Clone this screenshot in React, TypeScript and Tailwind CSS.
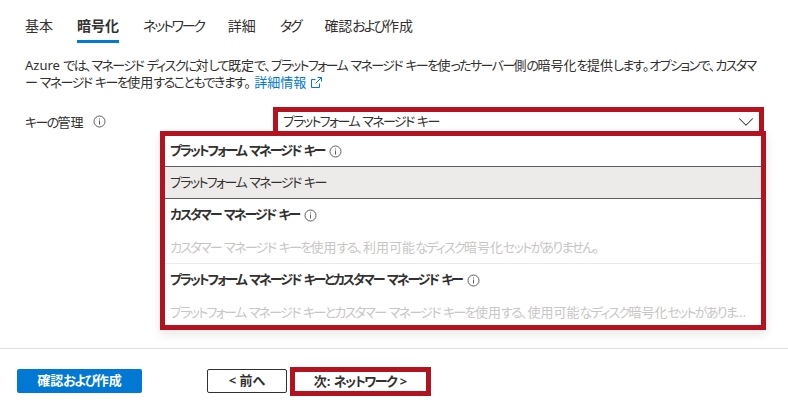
import { ChevronDown } from "lucide-react";

const font = "font-['Noto_Sans','Noto_Sans_CJK_JP',sans-serif] [font-feature-settings:'palt']";

// kana in the reference font runs narrower than in Noto, so those runs get tightened
const Jp = ({ text, tight = "tracking-[-1.65px]" }: { text: string; tight?: string }) => (
    <>
        {text.split(/([\u3041-\u30ff]+)/).map((part, i) =>
            i % 2 === 1 ? (
                <span key={i} className={tight}>
                    {part}
                </span>
            ) : (
                part
            )
        )}
    </>
);

const InfoIcon = () => (
    <svg width="13" height="13" viewBox="0 0 13 13" fill="none" stroke="#605e5c" className="shrink-0">
        <circle cx="6.5" cy="6.5" r="5.5" strokeWidth="1" />
        <path d="M6.5 5.5V9.5" strokeWidth="1" />
        <path d="M6.5 3.5V4.5" strokeWidth="1" />
    </svg>
);

const LinkIcon = () => (
    <svg width="11" height="11" viewBox="0 0 11 11" fill="none" stroke="#0078d4" strokeWidth="1">
        <path d="M8.5 6.5V10.5H0.5V2.5H4.5" />
        <path d="M6.5 0.5H10.5V4.5" />
        <path d="M10.5 0.5L4.5 6.5" />
    </svg>
);

const tabs = ["基本", "暗号化", "ネットワーク", "詳細", "タグ", "確認および作成"];

const GroupHeader = ({ label }: { label: string }) => (
    <div className="flex items-center gap-[5px] h-[32px] px-[5px] text-[13px] font-bold text-[#323130]">
        <span>
            <Jp text={label} tight="tracking-[-2.05px]" />
        </span>
        <InfoIcon />
    </div>
);

const DisabledRow = ({ label }: { label: string }) => (
    <div className="h-[32px] leading-[32px] px-[5px] text-[13px] text-[#c8c6c4] truncate">
        <Jp text={label} tight="tracking-[-1.72px]" />
    </div>
);

const App = () => {
    return (
        <div className={`${font} relative w-[788px] h-[409px] overflow-hidden bg-white text-[#323130]`}>
            <div className="flex gap-[24px] pl-[25px] pt-[16px] h-[43px]">
                {tabs.map((tab) => (
                    <div
                        key={tab}
                        className={
                            tab === "暗号化"
                                ? "h-[27px] text-[14px] leading-[20px] font-bold border-b-[3px] border-[#0078d4]"
                                : "h-[27px] text-[14px] leading-[20px]"
                        }
                    >
                        <Jp text={tab} tight="tracking-[-2.2px]" />
                    </div>
                ))}
            </div>

            <p className="mt-[14px] ml-[25px] w-[750px] text-[13px] leading-[17px]">
                <Jp
                    text="Azure では、マネージド ディスクに対して既定で、プラットフォーム マネージド キーを使ったサーバー側の暗号化を提供します。オプションで、カスタマ"
                    tight="tracking-[-1.62px]"
                />
                <br />
                <Jp text="ー マネージド キーを使用することもできます。 " tight="tracking-[-1.55px]" />
                <a className="text-[#0078d4]">詳細情報</a>
                <span className="inline-block ml-[5px] align-[-1px]">
                    <LinkIcon />
                </span>
            </p>

            <div className="flex mt-[16px] ml-[25px] h-[29px]">
                <div className="flex items-start gap-[9px] w-[248px] pt-[5px] text-[13px] leading-[20px]">
                    <span>
                        <Jp text="キーの管理" />
                    </span>
                    <span className="mt-[3px]">
                        <InfoIcon />
                    </span>
                </div>
                <div className="relative">
                    <div className="flex items-center justify-between w-[491px] h-[29px] border-[5px] border-[#b2131f] pl-[5px] text-[13px]">
                        <span>
                            <Jp text="プラットフォーム マネージド キー" />
                        </span>
                        <ChevronDown size={26} strokeWidth={0.95} color="#323130" />
                    </div>
                    <div className="absolute left-[-113px] top-[24px] w-[606px] h-[199px] bg-white border-[5px] border-[#b2131f] shadow-[0_4px_10px_rgba(0,0,0,0.1)]">
                        <div className="h-[30px] flex items-center">
                            <GroupHeader label="プラットフォーム マネージド キー" />
                        </div>
                        <div className="h-[33px] leading-[30px] px-[5px] text-[13px] bg-[#edebe9] border-y border-[#605e5c]">
                            <Jp text="プラットフォーム マネージド キー" />
                        </div>
                        <GroupHeader label="カスタマー マネージド キー" />
                        <DisabledRow label="カスタマー マネージド キーを使用する、利用可能なディスク暗号化セットがありません。" />
                        <div className="border-t border-[#edebe9]" />
                        <GroupHeader label="プラットフォーム マネージド キーとカスタマー マネージド キー" />
                        <DisabledRow label="プラットフォーム マネージド キーとカスタマー マネージド キーを使用する、使用可能なディスク暗号化セットがありません。" />
                    </div>
                </div>
            </div>

            <div className="mt-[212px] border-t border-[#e1e1e1]" />

            <div className="flex items-center mt-[18px] ml-[17px] h-[28px]">
                <button className="w-[125px] h-[24px] rounded-[2px] bg-[#0078d4] text-white text-[13px] font-bold">
                    <Jp text="確認および作成" tight="tracking-[-1.4px]" />
                </button>
                <button className="ml-[65px] w-[80px] h-[24px] rounded-[2px] border border-[#323130] bg-white text-[13px] font-bold">
                    &lt; 前へ
                </button>
                <button className="ml-[3px] w-[141px] h-[29px] border-[5px] border-[#b2131f] bg-white text-[13px] font-bold">
                    <Jp text="次: ネットワーク >" tight="tracking-[-1.4px]" />
                </button>
            </div>
        </div>
    );
};

export default App;
